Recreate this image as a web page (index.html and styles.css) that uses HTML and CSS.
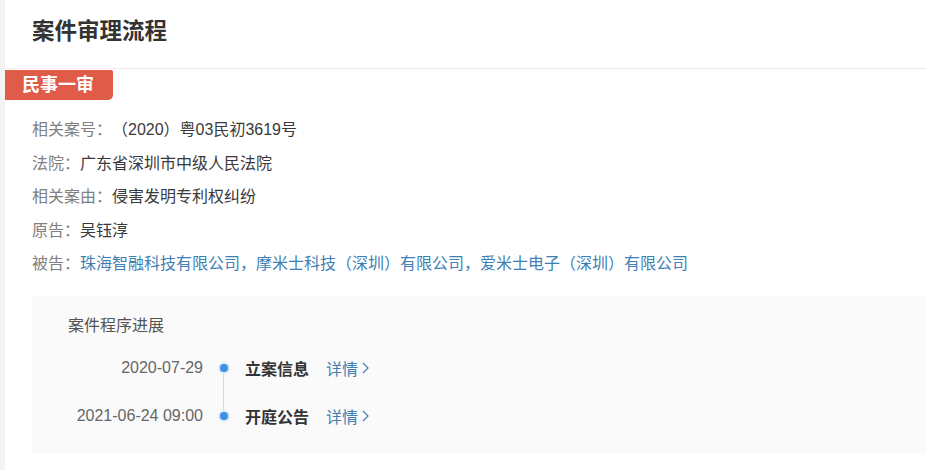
FILE: index.html
```html
<!DOCTYPE html>
<html lang="zh-CN">
<head>
    <meta charset="UTF-8">
    <meta name="viewport" content="width=device-width, initial-scale=1.0">
    <title>案件审理流程</title>
    <link rel="stylesheet" href="styles.css">
</head>
<body>
    <div class="card">
        <div class="card-header">
            <h1>案件审理流程</h1>
        </div>

        <div class="stage-tag">民事一审</div>

        <ul class="case-info">
            <li><span class="label">相关案号：</span><span class="value">（2020）粤03民初3619号</span></li>
            <li><span class="label">法院：</span><span class="value">广东省深圳市中级人民法院</span></li>
            <li><span class="label">相关案由：</span><span class="value">侵害发明专利权纠纷</span></li>
            <li><span class="label">原告：</span><span class="value">吴钰淳</span></li>
            <li><span class="label">被告：</span><a class="link" href="#">珠海智融科技有限公司</a><span class="link">，</span><a class="link" href="#">摩米士科技（深圳）有限公司</a><span class="link">，</span><a class="link" href="#">爱米士电子（深圳）有限公司</a></li>
        </ul>

        <div class="progress">
            <h3>案件程序进展</h3>
            <div class="timeline">
                <div class="node">
                    <span class="date">2020-07-29</span>
                    <span class="dot"></span>
                    <span class="event">立案信息</span>
                    <a class="detail" href="#">详情<svg width="7" height="12" viewBox="0 0 7 12"><path d="M1 1l5 5-5 5" fill="none" stroke="currentColor" stroke-width="1.2"/></svg></a>
                </div>
                <div class="node">
                    <span class="date">2021-06-24 09:00</span>
                    <span class="dot"></span>
                    <span class="event">开庭公告</span>
                    <a class="detail" href="#">详情<svg width="7" height="12" viewBox="0 0 7 12"><path d="M1 1l5 5-5 5" fill="none" stroke="currentColor" stroke-width="1.2"/></svg></a>
                </div>
            </div>
        </div>
    </div>
</body>
</html>
```

FILE: styles.css
```css
body {
    margin: 0;
    padding: 0;
    background-color: #f3f3f3;
    font-family: "Liberation Sans", "Noto Sans CJK SC", sans-serif;
    color: #333;
    text-spacing-trim: space-all;
}
.card {
    margin-left: 5px;
    min-height: 470px;
    background: #fff;
    overflow: hidden;
}
.card-header {
    height: 68px;
    border-bottom: 1px solid #ebebeb;
    padding-left: 27px;
}
.card-header h1 {
    margin: 0;
    padding-top: 17px;
    font-size: 22.5px;
    line-height: 30px;
    font-weight: bold;
    color: #333;
}
.stage-tag {
    width: 91px;
    height: 30px;
    margin-top: 1px;
    padding-left: 17px;
    background-color: #e05b48;
    color: #fff;
    font-size: 18px;
    font-weight: bold;
    line-height: 30px;
    border-radius: 0 2px 5px 0;
}
.case-info {
    list-style: none;
    margin: 13px 0 0;
    padding: 0 0 0 27px;
    font-size: 16px;
    line-height: 33.5px;
}
.case-info .label {
    color: #808080;
}
.case-info .value {
    color: #3a3a3a;
}
.link {
    color: #3f7fb4;
    text-decoration: none;
}
.progress {
    margin: 15px 0 0 27px;
    padding: 18px 0 13px 36px;
    background: #fafafa;
}
.progress h3 {
    margin: 0 0 6px;
    font-size: 16px;
    line-height: 24px;
    font-weight: normal;
    color: #555;
}
.node {
    display: flex;
    align-items: center;
    height: 48px;
    position: relative;
}
.date {
    width: 135px;
    text-align: right;
    color: #666;
    font-size: 16px;
}
.dot {
    width: 42px;
    display: flex;
    justify-content: center;
    position: relative;
}
.dot::before {
    content: "";
    width: 8px;
    height: 8px;
    border-radius: 50%;
    background: #3d8fe0;
    box-shadow: 0 0 0 2px #dceaf8;
    position: relative;
    z-index: 1;
}
.node:not(:last-child) .dot::after {
    content: "";
    position: absolute;
    left: 20px;
    top: 4px;
    width: 1px;
    height: 48px;
    background: #c9dcee;
}
.event {
    font-size: 16px;
    font-weight: bold;
    color: #333;
}
.detail {
    margin-left: 17px;
    color: #3f7fb4;
    text-decoration: none;
    font-size: 16px;
    display: flex;
    align-items: center;
}
.detail svg {
    margin-left: 4px;
}
```
